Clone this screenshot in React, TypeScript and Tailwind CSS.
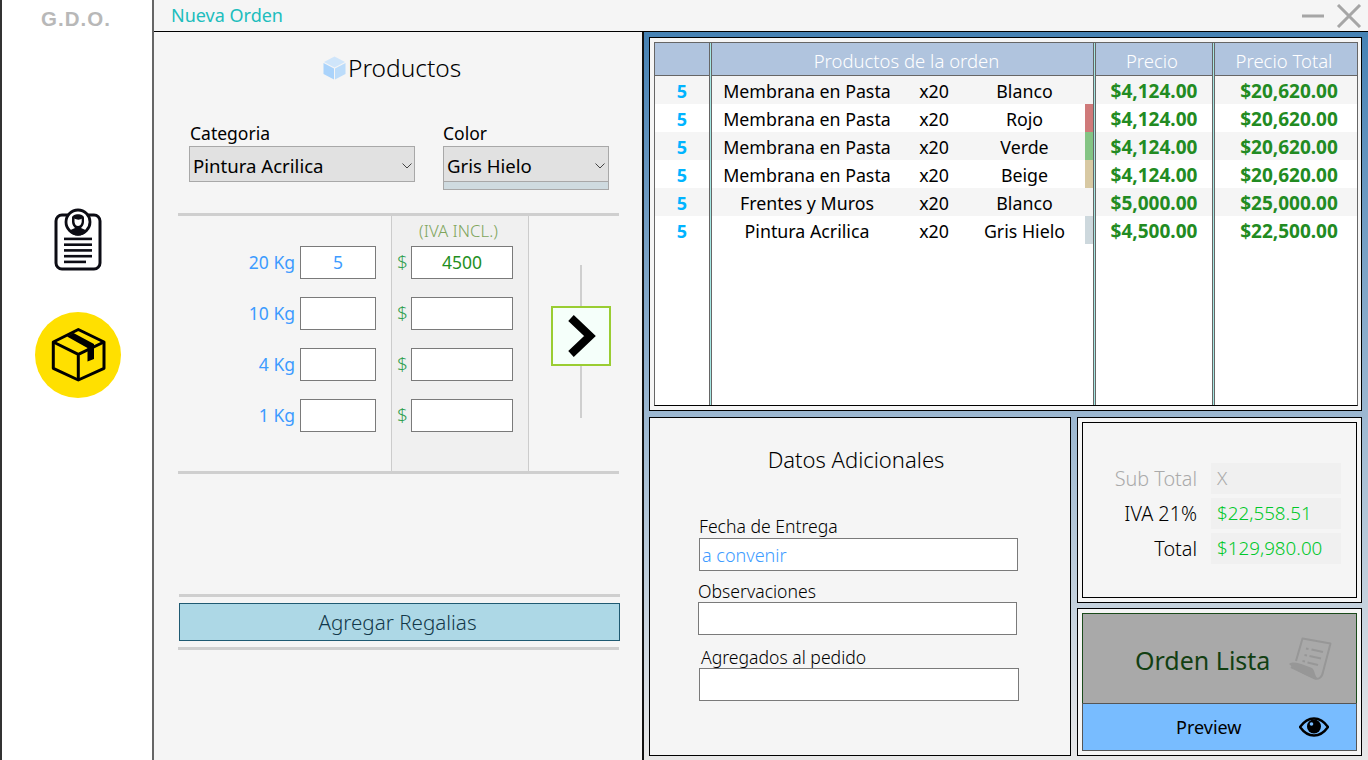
import React from "react";

const font = "font-['Noto_Sans','Open_Sans',sans-serif]";

const rows = [
  { name: "Membrana en Pasta", color: "Blanco", swatch: "", price: "$4,124.00", total: "$20,620.00" },
  { name: "Membrana en Pasta", color: "Rojo", swatch: "bg-[#cf7a7a]", price: "$4,124.00", total: "$20,620.00" },
  { name: "Membrana en Pasta", color: "Verde", swatch: "bg-[#84c484]", price: "$4,124.00", total: "$20,620.00" },
  { name: "Membrana en Pasta", color: "Beige", swatch: "bg-[#d8c9a3]", price: "$4,124.00", total: "$20,620.00" },
  { name: "Frentes y Muros", color: "Blanco", swatch: "", price: "$5,000.00", total: "$25,000.00" },
  { name: "Pintura Acrilica", color: "Gris Hielo", swatch: "bg-[#cdd8dd]", price: "$4,500.00", total: "$22,500.00" },
];

const stripe = (i: number) => (i % 2 === 0 ? "bg-[#f5f5f5]" : "bg-white");

function Sep() {
  return <div className="h-full w-[3px] shrink-0 border-x border-[#666] bg-[#a5e8e4]" />;
}

function Head({ children, cls = "" }: { children?: React.ReactNode; cls?: string }) {
  return (
    <div className={`flex h-[33px] items-center justify-center border-b border-[#666] bg-[#b0c4de] pt-[4px] text-[18.5px] font-light text-white ${cls}`}>
      {children}
    </div>
  );
}

function Chevron() {
  return (
    <svg viewBox="0 0 10 6" className="mt-[3px] h-[6px] w-[10px]" fill="none" stroke="#444" strokeWidth="1">
      <path d="M0.5 0.5 L5 5 L9.5 0.5" />
    </svg>
  );
}

function Input({ w, children, cls = "" }: { w: string; children?: React.ReactNode; cls?: string }) {
  return (
    <div className={`flex h-[33px] items-center justify-center border border-[#7a7a7a] bg-white text-[17.5px] ${w} ${cls}`}>
      {children}
    </div>
  );
}

function Rule() {
  return <div className="h-[3px] w-[441px] bg-[#cfcfcf]" />;
}

function ClipboardIcon() {
  return (
    <svg viewBox="53 208 50 64" className="h-[64px] w-[50px]">
      <rect x="56" y="215" width="44" height="54" rx="6" fill="#fff" stroke="#0c0c14" strokeWidth="3" />
      <circle cx="78" cy="222" r="12" fill="#fff" stroke="#0c0c14" strokeWidth="2.8" />
      <path d="M72 218 C72 213 84 213 84 218 L84 222 C84 225 82 227 81 228 C83 229 86 230 87 231 A11 11 0 0 1 69 231 C70 230 73 229 75 228 C74 227 72 225 72 222 Z" fill="#0c0c14" />
      <path d="M74.5 218.5 C76 220 81 220 81.7 218.5 L81.7 222 C81 225 79.5 226 78 226 C76.5 226 75 225 74.5 222 Z" fill="#fff" />
      <g fill="#0c0c14">
        <rect x="64" y="237.6" width="28" height="2.6" />
        <rect x="64" y="243.4" width="28" height="2.6" />
        <rect x="64" y="249.1" width="28" height="2.6" />
        <rect x="64" y="254.9" width="28" height="2.6" />
        <rect x="64" y="260.6" width="22" height="2.6" />
      </g>
    </svg>
  );
}

function BoxIcon() {
  return (
    <svg viewBox="35 312 86 86" className="h-[86px] w-[86px]">
      <g fill="none" stroke="#000" strokeWidth="3" strokeLinejoin="round">
        <path d="M78.3 329.5 L104 342 L104 368.3 L78.3 380 L53.3 368.3 L53.3 342 Z" />
        <path d="M53.3 342 L78.3 354.3 L104 342 M78.3 354.3 L78.3 380" />
      </g>
      <path d="M67 336.5 L73.5 333 L94 344 L94 359 L87.5 361.5 L87.5 348 Z" fill="#000" />
    </svg>
  );
}

function CubeIcon() {
  return (
    <svg viewBox="323 56 23 24" className="h-[24px] w-[23px]">
      <path d="M334.5 56.5 L345 62 L334.5 67.5 L324 62 Z" fill="#cfe5fa" />
      <path d="M323.5 63 L334 68.5 L334 79.5 L323.5 74 Z" fill="#aad3fb" />
      <path d="M335 68.5 L345.5 63 L345.5 74 L335 79.5 Z" fill="#bcdcfa" />
    </svg>
  );
}

function ReceiptIcon() {
  return (
    <svg viewBox="1290 637 44 44" className="h-[44px] w-[44px]" fill="none">
      <path d="M1298 661 L1304.5 638.5 L1332.5 643.5 L1325 672 C1324 678 1320 680 1316 678 L1293 667" stroke="#979797" strokeWidth="2" strokeLinejoin="round" />
      <path d="M1291 664 C1295 661 1300 663 1306 665 L1314 668 C1317 670 1316 675 1320 679 C1314 679 1300 672 1291 664 Z" fill="#979797" />
      <g stroke="#979797" strokeWidth="2">
        <path d="M1313.5 649.5 L1325 652 M1311.5 656 L1323 658.5 M1309.5 662.5 L1320 665" />
        <path d="M1308 648.5 L1310.5 649 M1306.5 655 L1309 655.5 M1304.5 661 L1307 661.5" />
      </g>
    </svg>
  );
}

function EyeIcon() {
  return (
    <svg viewBox="0 0 30 20" className="h-[20px] w-[30px]">
      <path d="M1 10 C6 3 10 1.5 15 1.5 C20 1.5 24 3 29 10 C24 17 20 18.5 15 18.5 C10 18.5 6 17 1 10 Z" fill="#78bcff" stroke="#000" strokeWidth="2.4" />
      <circle cx="15" cy="9.5" r="7" fill="#000" />
      <circle cx="12.5" cy="7" r="1.8" fill="#78bcff" />
    </svg>
  );
}

const sizes = [
  { kg: "20 Kg", qty: "5", price: "4500" },
  { kg: "10 Kg", qty: "", price: "" },
  { kg: "4 Kg", qty: "", price: "" },
  { kg: "1 Kg", qty: "", price: "" },
];

function Sidebar() {
  return (
    <aside className="flex h-full w-[154px] shrink-0 flex-col items-center border-l-2 border-r-2 border-l-[#333] border-r-[#666] bg-white">
      <div className="mt-[7px] h-[24px] pr-[2px] text-[20.5px] font-bold leading-[24px] tracking-[1px] text-[#b8b8b8] font-['Liberation_Sans',sans-serif]">G.D.O.</div>
      <div className="mt-[177px] ml-[2px]"><ClipboardIcon /></div>
      <div className="mt-[40px] ml-[2px] h-[86px] w-[86px] rounded-full bg-[#ffe000]"><BoxIcon /></div>
    </aside>
  );
}

function LeftPanel() {
  return (
    <section className="flex h-full w-[488px] shrink-0 flex-col bg-[#f5f5f5] pl-[24px]">
      <div className="mt-[24px] ml-[145px] flex h-[24px] items-center gap-[2px]">
        <CubeIcon />
        <span className="text-[24.5px] font-light text-black">Productos</span>
      </div>
      <div className="mt-[43px] flex">
        <div className="ml-[11px] w-[226px]">
          <div className="h-[23px] pl-[1px] text-[17.5px] leading-[20px] text-black">Categoria</div>
          <div className="flex h-[36px] items-center justify-between border border-[#a8a8a8] bg-[#e1e1e1] pl-[3px] pr-[2px] text-[18.6px] text-black">
            <span className="pt-[3px]">Pintura Acrilica</span><Chevron />
          </div>
        </div>
        <div className="ml-[28px] w-[166px]">
          <div className="h-[23px] text-[17.5px] leading-[20px] text-black">Color</div>
          <div className="flex h-[36px] items-center justify-between border border-[#a8a8a8] bg-[#e1e1e1] pl-[3px] pr-[3px] text-[18.6px] text-black">
            <span className="pt-[3px]">Gris Hielo</span><Chevron />
          </div>
          <div className="h-[8px] border-x border-b border-[#a8a8a8] bg-[#cfdbe0]" />
        </div>
      </div>

      <div className="mt-[23px]"><Rule /></div>
      <div className="flex h-[255px] w-[441px]">
        <div className="flex w-[213px] flex-col gap-[18px] pt-[30px] pr-[15px]">
          {sizes.map((s) => (
            <div key={s.kg} className="flex items-center justify-end gap-[5px]">
              <span className="text-[17.5px] text-[#3d9bff]">{s.kg}</span>
              <Input w="w-[76px]" cls="text-[#3d9bff]">{s.qty}</Input>
            </div>
          ))}
        </div>
        <div className="flex w-[138px] flex-col border-x border-[#ccc] bg-[#f0f0f0]">
          <div className="flex h-[30px] items-center justify-center pr-[3px] text-[16.8px] font-light text-[#7fa55c]">(IVA INCL.)</div>
          <div className="flex flex-col gap-[18px] pl-[4px]">
            {sizes.map((s) => (
              <div key={s.kg} className="flex items-center">
                <span className="w-[14px] pr-[1px] text-center text-[19px] font-light text-[#2f9f4f]">$</span>
                <Input w="ml-[1px] w-[102px]" cls="text-[#1f8f1f]">{s.price}</Input>
              </div>
            ))}
          </div>
        </div>
        <div className="flex flex-1 flex-col items-center pt-[49px] pl-[13px]">
          <div className="h-[41px] w-[2px] bg-[#cfcfcf]" />
          <div className="flex h-[60px] w-[60px] shrink-0 items-center justify-center border-2 border-[#9acd32] bg-[#f5fffa]">
            <svg viewBox="0 0 30 44" className="h-[44px] w-[30px]" fill="none" stroke="#000" strokeWidth="8">
              <path d="M5 4 L24 22 L5 40" />
            </svg>
          </div>
          <div className="h-[52px] w-[2px] bg-[#cfcfcf]" />
        </div>
      </div>
      <Rule />

      <div className="mt-[120px] ml-[1px]"><Rule /></div>
      <div className="mt-[6px] ml-[1px] flex h-[38px] w-[441px] items-center justify-center border border-[#1f5a72] bg-[#add8e6] pr-[4px] text-[20.6px] font-light text-[#12384a]">
        Agregar Regalias
      </div>
      <div className="mt-[6px]"><Rule /></div>
    </section>
  );
}

function OrderTable() {
  return (
    <div className="flex h-[364px] w-[704px] border-x border-x-[#666] border-b border-b-black border-t border-t-[#666] bg-white">
      <div className="w-[54px] shrink-0">
        <Head />
        {rows.map((r, i) => (
          <div key={i} className={`flex h-[28px] items-center justify-center pt-[2px] text-[18px] font-bold text-[#00b4ff] ${stripe(i)}`}>5</div>
        ))}
      </div>
      <Sep />
      <div className="w-[381px] shrink-0">
        <Head cls="pl-[8px]">Productos de la orden</Head>
        {rows.map((r, i) => (
          <div key={i} className={`flex h-[28px] items-center pl-[1px] text-[17.8px] text-black ${stripe(i)}`}>
            <span className="w-[188px] pt-[2px] text-center">{r.name}</span>
            <span className="w-[66px] pt-[2px] text-center">x20</span>
            <span className="w-[115px] pt-[2px] text-center">{r.color}</span>
            <span className={`ml-[3px] h-full w-[8px] ${r.swatch}`} />
          </div>
        ))}
      </div>
      <Sep />
      <div className="w-[116px] shrink-0">
        <Head cls="pr-[4px]">Precio</Head>
        {rows.map((r, i) => (
          <div key={i} className={`flex h-[28px] items-center justify-center pt-[2px] text-[19px] font-bold text-[#228b22] ${stripe(i)}`}>{r.price}</div>
        ))}
      </div>
      <Sep />
      <div className="flex-1">
        <Head cls="pr-[4px]">Precio Total</Head>
        {rows.map((r, i) => (
          <div key={i} className={`flex h-[28px] items-center justify-center pl-[6px] pt-[2px] text-[19px] font-bold text-[#228b22] ${stripe(i)}`}>{r.total}</div>
        ))}
      </div>
    </div>
  );
}

function Field({ label, value, labelMl, boxMl, boxMt, mt, w }: { label: string; value?: string; labelMl: string; boxMl: string; boxMt: string; mt: string; w: string }) {
  return (
    <div className={mt}>
      <div className={`h-[20px] text-[17.6px] font-light leading-[20px] text-black ${labelMl}`}>{label}</div>
      <div className={`flex h-[33px] items-center border border-[#7a7a7a] bg-white pl-[2px] pt-[1px] text-[18px] font-light text-[#3d9bff] ${w} ${boxMl} ${boxMt}`}>{value}</div>
    </div>
  );
}

function Datos() {
  return (
    <div className="h-[339px] w-[422px] shrink-0 border border-black bg-[#f5f5f5]">
      <div className="mt-[26px] h-[30px] pr-[8px] text-center text-[22px] font-light leading-[30px] text-black">Datos Adicionales</div>
      <Field mt="mt-[42px]" w="w-[319px]" label="Fecha de Entrega" value="a convenir" labelMl="ml-[49px]" boxMl="ml-[49px]" boxMt="mt-[2px]" />
      <Field mt="mt-[10px]" w="w-[319px]" label="Observaciones" labelMl="ml-[48px]" boxMl="ml-[48px]" boxMt="mt-[1px]" />
      <Field mt="mt-[12px]" w="w-[320px]" label="Agregados al pedido" labelMl="ml-[51px]" boxMl="ml-[49px]" boxMt="mt-[1px]" />
    </div>
  );
}

function Totals() {
  const data = [
    { l: "Sub Total", v: "X", lc: "text-[#aaa]", vc: "text-[#aaa]" },
    { l: "IVA 21%", v: "$22,558.51", lc: "text-black", vc: "text-[#00c82a]" },
    { l: "Total", v: "$129,980.00", lc: "text-black", vc: "text-[#00c82a]" },
  ];
  return (
    <div className="h-[186px] w-[285px] border border-black bg-[#f5f5f5] p-[4px]">
      <div className="flex h-full flex-col gap-[4px] border border-black pt-[40px]">
        {data.map((d) => (
          <div key={d.l} className="flex h-[31px] items-center">
            <span className={`w-[114px] text-right text-[19.8px] font-light ${d.lc}`}>{d.l}</span>
            <span className={`ml-[14px] flex h-full w-[130px] items-center bg-[#f0f0f0] pl-[6px] text-[18.8px] font-light ${d.vc}`}>{d.v}</span>
          </div>
        ))}
      </div>
    </div>
  );
}

function Actions() {
  return (
    <div className="mt-[5px] h-[148px] w-[285px] border border-black bg-[#f5f5f5] p-[4px]">
      <div className="flex h-[90px] items-center justify-between border border-b-0 border-[#1a4a1a] bg-[#a9a9a9] pl-[52px] pr-[24px] text-[25px] text-[#123f12]">
        <span className="pt-[5px]">Orden Lista</span>
        <ReceiptIcon />
      </div>
      <div className="flex h-[48px] items-center justify-between border border-[#555] bg-[#78bcff] pl-[93px] pr-[27px] text-[18px] text-black">
        <span>Preview</span>
        <EyeIcon />
      </div>
    </div>
  );
}

function RightPanel() {
  return (
    <section className="h-full flex-1 border-l-2 border-[#111] bg-gradient-to-b from-[#4682b4] to-[#e8e8e8] pl-[5px] pt-[5px]">
      <div className="h-[374px] w-[713px] border border-black bg-[#f5f5f5] p-[4px]">
        <OrderTable />
      </div>
      <div className="mt-[6px] flex gap-[6px]">
        <Datos />
        <div>
          <Totals />
          <Actions />
        </div>
      </div>
    </section>
  );
}

export default function App() {
  return (
    <div className={`flex h-[760px] w-[1368px] overflow-hidden bg-[#f5f5f5] ${font}`}>
      <Sidebar />
      <main className="flex h-full flex-1 flex-col">
        <header className="flex h-[32px] shrink-0 items-center justify-between border-b border-black pl-[17px] pr-[6px]">
          <span className="pb-[1px] text-[18px] text-[#20bdbd]">Nueva Orden</span>
          <div className="flex items-center gap-[12px]">
            <svg viewBox="0 0 22 4" className="h-[4px] w-[22px]"><rect width="22" height="3" y="0.5" fill="#a6a6a6" /></svg>
            <svg viewBox="0 0 26 24" className="h-[24px] w-[26px]" fill="none" stroke="#a6a6a6" strokeWidth="3">
              <path d="M2 1 L24 23 M24 1 L2 23" />
            </svg>
          </div>
        </header>
        <div className="flex h-[728px]">
          <LeftPanel />
          <RightPanel />
        </div>
      </main>
    </div>
  );
}
